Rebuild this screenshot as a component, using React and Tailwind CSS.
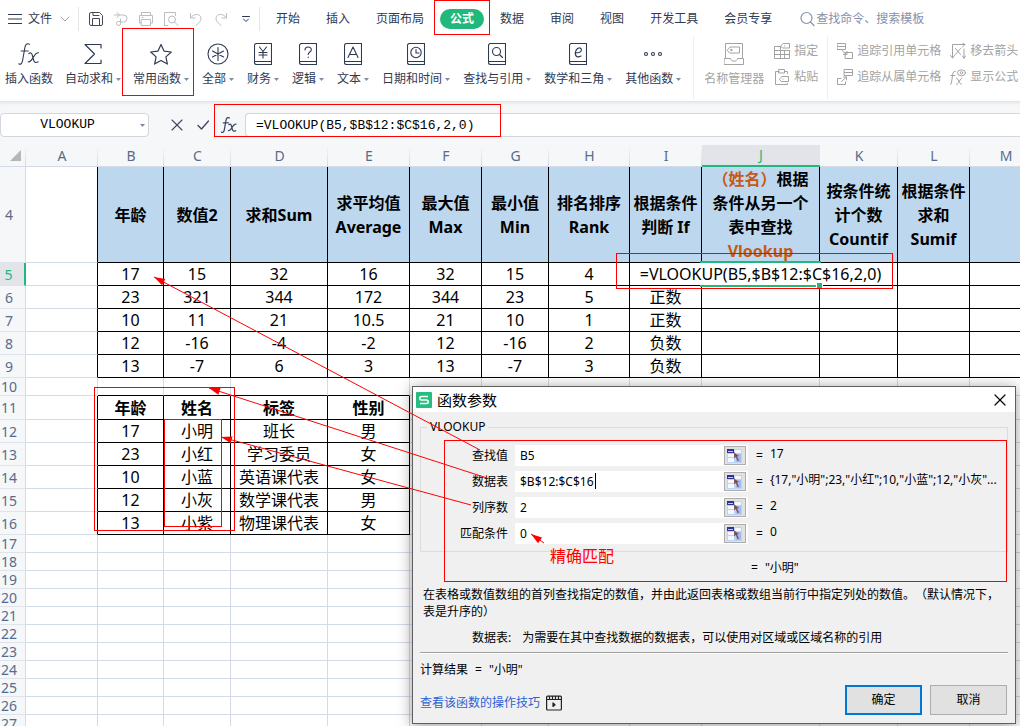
import React from "react";

/* ---------- icons ---------- */

function Line({ w = 16, h = 16, sw = 1, children, className = "" }) {
  return (
    <svg
      width={w}
      height={h}
      viewBox={`0 0 ${w} ${h}`}
      fill="none"
      stroke="currentColor"
      strokeWidth={sw}
      strokeLinecap="round"
      strokeLinejoin="round"
      className={"shrink-0 " + className}
      aria-hidden="true"
    >
      {children}
    </svg>
  );
}

const FxPaths = () => (
  <>
    <path d="M11.5 1.2C8.6-.2 7.3 2 6.8 5L4.600 17.500C4 20.600 2.700 22 .8 20.800M3.200 8h7" />
    <path d="M10.800 10.600c2-1.600 3-.4 3.600 1.900l1.200 4.500c.5 2 1.800 3.300 4.600 1.800M20.500 9.800c-2.200-.3-3.200 1.200-5 4.200s-3.200 5.400-5.300 4.800" />
  </>
);
const FxIcon = () => <Line w={22} h={22} sw={1.1}><FxPaths /></Line>;

const SumIcon = () => (
  <Line w={20} h={22} sw={1.2}><path d="M18 5V1.500H2L11.500 11 2 20.500h16V17" /></Line>
);
const StarIcon = () => (
  <Line w={24} h={22} sw={1.2}>
    <path d="M12 1.500l3.100 6.700 7.200.8-5.400 4.900 1.500 7.200L12 17.500l-6.400 3.600 1.500-7.200L1.700 9l7.200-.8z" />
  </Line>
);
const AllIcon = () => (
  <Line w={22} h={22} sw={1.1}>
    <circle cx="11" cy="11" r="10" />
    <path d="M11 4.500v13M5.500 8l11 6M16.500 8l-11 6" />
  </Line>
);
const Book = ({ children }) => (
  <Line w={18} h={22} sw={1.1}>
    <path d="M17.500.5H2.500a2 2 0 0 0-2 2v17a2 2 0 0 0 2 2h15zM.8 18.500h16.700" />
    {children}
  </Line>
);
const YenIcon = () => <Book><path d="M5.500 4L9 8.500 12.500 4M9 8.500V15M5 9.500h8M5 12h8" /></Book>;
const AskIcon = () => (
  <Book>
    <path d="M6 7c0-4 6.300-4 6.300-.3C12.300 9 9.200 9 9.200 11.500M9.200 14v.5" />
  </Book>
);
const TextIcon = () => <Book><path d="M4 14.500L9 4l5 10.500M5.700 11.500h6.600" /></Book>;
const ClockIcon = () => <Book><circle cx="9" cy="9.500" r="5.200" /><path d="M9 6.500v3.500h3" /></Book>;
const FindIcon = () => <Book><circle cx="8.500" cy="8.500" r="4" /><path d="M11.500 11.500l3 3" /></Book>;
const MathIcon = () => (
  <Book><path d="M6 9.700c4 .3 6.500-.7 6.400-3C12.300 4 7.500 4 6.500 9c-.8 4.500 2 6 5.500 4" /></Book>
);
const MoreIcon = () => (
  <Line w={20} h={22} sw={1.1}>
    <circle cx="3" cy="11" r="1.500" /><circle cx="10" cy="11" r="1.500" /><circle cx="17" cy="11" r="1.500" />
  </Line>
);
const NamesIcon = () => (
  <Line w={20} h={22}>
    <path d="M1.500 15.500V.5h17v15M.5 15.500h6c.5 3.600 6.500 3.600 7 0h6v6H.5z" />
    <path d="M3.500 7L6 4h9.500v6H6z" /><circle cx="7.200" cy="7" r=".8" />
  </Line>
);
const AssignIcon = () => (
  <Line>
    <path d="M6 3.500H.5v12h15v-8M.5 7.500h15M.5 11.500h15M6.500 3.500v12M10.500 7.500v8M7 2.800L9 .5h6.500v4.500H9z" />
    <path d="M10.500 2.800h.2" />
  </Line>
);
const PasteIcon = () => (
  <Line>
    <path d="M11 2.500h2.500v2M5 2.500H1.500v13h12v-1M5 .5h5.500v3.500H5zM5.500 10L8 7.500h6.500v5H8z" />
    <path d="M9 10h.2" />
  </Line>
);
const TraceToIcon = () => (
  <Line>
    <path d="M.5.5h8v6h-8zM.5 3.500h8M8.500 9.500h7v6h-7zM.5 6.500h4M5 7.500l4.500 4M10 8.500v3H6.500" />
  </Line>
);
const TraceFromIcon = () => (
  <Line>
    <path d="M7.500.5h8v6h-8zM7.500 3.500h8M4 9.500H.5v6h8V13M4.500 12.500l5-4.500M6.500 8h3v3" />
  </Line>
);
const RemoveArrowsIcon = () => (
  <Line>
    <path d="M2.500 15V1.500H15M12.500 0L15 1.500 12.500 4M14 6v9M.5 12.500l2 2.500 2-2.500M15.500 13L14 15.300 12.500 13M5.500 5.500l5 6M10.500 5.500l-5 6" />
  </Line>
);
const ShowFormulaIcon = () => (
  <Line>
    <path d="M5.500 2.500c-2-.8-2.500 1-2.800 3L1.600 13c-.2 1.700-.6 2.500-1.300 2.300M.8 6.500h4M6.500 9c2 0 2.500 6.300 5 6.300M12 9c-2 0-3 6.300-5.500 6.300" />
    <ellipse cx="11.500" cy="3.800" rx="4" ry="3" /><circle cx="11.500" cy="3.800" r="1.200" />
  </Line>
);

const SaveIcon = () => (
  <Line><path d="M1.500 12.500V3A1.500 1.500 0 0 1 3 1.500h8.500l3 3V13a1.500 1.500 0 0 1-1.500 1.500H3A1.500 1.500 0 0 1 1.500 13zM5 1.500v3h6M4.500 14.500v-7h7v7" /></Line>
);
const ShareIcon = () => (
  <Line><path d="M4 1.500L6.500 4 4 6.500M1.500 4h9a3.500 3.500 0 0 1 0 7H7M7.500 8v4.500a2 2 0 1 1-2-2h2" /></Line>
);
const PrintIcon = () => (
  <Line><path d="M3.500 4.500v-3h9v3M3.500 12H1.500V4.500h13V12h-2M3.500 8.500h9v6h-9zM4 6.500h1" /></Line>
);
const PreviewIcon = () => (
  <Line><path d="M5 14.500H1.500v-13h11v3" /><circle cx="9" cy="8.500" r="3.500" /><path d="M11.500 11l3.500 3.500" /></Line>
);
const UndoIcon = () => (
  <Line><path d="M2.500 2.500v4.500h4.500M2.800 6.500C6 2 13 2.500 13 7.500c0 3-2.500 4.500-5 7" /></Line>
);
const RedoIcon = () => (
  <Line><path d="M13.500 2.500v4.500H9M13.200 6.500C10 2 3 2.500 3 7.500c0 3 2.500 4.500 5 7" /></Line>
);
const PlayIcon = () => (
  <Line sw={1.200}>
    <rect x=".6" y="1.200" width="14.800" height="13.800" rx="1" />
    <path d="M.8 4.500h14.400M3.500 1.500v3M6.500 1.500v3M9.500 1.500v3M12.500 1.500v3" />
    <path d="M7 8v3.500L9 9.800z" fill="currentColor" />
  </Line>
);
const RangeIcon = () => (
  <svg width="16" height="14" viewBox="0 0 16 14" aria-hidden="true">
    <path d="M7 0h8v14H0V4h7z" fill="#b9d3fb" />
    <path d="M1 5h6v3H1zM1 9h6v4H1zM8 1h6v3H8z" fill="#f4f8ff" />
    <path d="M9 5h5v8H9z" fill="#9dbdf5" />
    <path d="M0 0h7v4H0z" fill="#33338f" />
    <path d="M1 2h5v1H1z" fill="#c9c9d8" />
    <path d="M7 3.500l5 3.500-2 .5 2 4-1.300.6-1.900-4L7.200 9.500z" fill="#8a4a42" />
  </svg>
);

const Caret = () => (
  <svg width="5" height="3" viewBox="0 0 5 3" className="shrink-0 text-[#7f8ba3]" aria-hidden="true">
    <path d="M0 0h5L2.500 3z" fill="currentColor" />
  </svg>
);

/* ---------- ribbon ---------- */

const tabs = ["开始", "插入", "页面布局", "公式", "数据", "审阅", "视图", "开发工具", "会员专享"];

const quick = [
  ["保存", SaveIcon, "text-[#444a55]"],
  ["输出", ShareIcon, "text-[#bdbdbd]"],
  ["打印", PrintIcon, "text-[#bdbdbd]"],
  ["打印预览", PreviewIcon, "text-[#bdbdbd]"],
  ["撤销", UndoIcon, "text-[#bdbdbd]"],
  ["恢复", RedoIcon, "text-[#bdbdbd]"],
];

function TopBar() {
  return (
    <div className="flex h-[37px] shrink-0 items-center whitespace-nowrap">
      <button className="flex items-center pl-2">
        <Line w={14} h={10}><path d="M0 .5h14M0 5h14M0 9.500h14" /></Line>
        <span className="ml-1.5">文件</span>
        <Line w={10} h={6} className="ml-2 text-[#a0a4ab]"><path d="M1 1l4 4 4-4" /></Line>
      </button>
      <div className="ml-2 h-6 w-px bg-[#e3e5e8]" />
      <div className="ml-[9px] flex items-center gap-[9px]">
        {quick.map(([name, Icon, color]) => (
          <button key={name} aria-label={name} className={color}><Icon /></button>
        ))}
        <button aria-label="自定义" className="ml-1">
          <Line w={8} h={8}><path d="M.5 1.500h7M1.500 4L4 6.500 6.500 4" /></Line>
        </button>
      </div>
      <div className="ml-[9px] h-6 w-px bg-[#e3e5e8]" />
      <nav className="ml-4 flex items-center gap-[26px]">
        {tabs.map((t) =>
          t === "公式" ? (
            <button key={t} className="-mx-2.5 h-5 rounded-full bg-[#21b97b] px-2.5 font-bold leading-5 text-white">{t}</button>
          ) : (
            <button key={t}>{t}</button>
          )
        )}
      </nav>
      <button className="ml-7 flex items-center gap-px text-[#8591ab]">
        <Line w={15} h={16} sw={1.200}><circle cx="6.500" cy="7" r="5.500" /><path d="M10.500 11l3.500 3.500" /></Line>
        查找命令、搜索模板
      </button>
    </div>
  );
}

function Tool({ icon: Icon, label, menu = true }) {
  return (
    <button className="flex flex-col items-center gap-1">
      <Icon />
      <span className="flex items-center gap-[3px] leading-5">
        {label}
        {menu && <Caret />}
      </span>
    </button>
  );
}

const library = [
  ["全部", AllIcon], ["财务", YenIcon], ["逻辑", AskIcon], ["文本", TextIcon], ["日期和时间", ClockIcon],
  ["查找与引用", FindIcon], ["数学和三角", MathIcon], ["其他函数", MoreIcon],
];

function Small({ icon: Icon, label }) {
  return (
    <button className="flex items-center gap-1 leading-4"><Icon />{label}</button>
  );
}

function Ribbon() {
  return (
    <div className="flex h-16 shrink-0 items-start whitespace-nowrap">
      <div className="flex gap-3 pl-[5px] pt-1.5">
        <Tool icon={FxIcon} label="插入函数" menu={false} />
        <Tool icon={SumIcon} label="自动求和" />
        <Tool icon={StarIcon} label="常用函数" />
      </div>
      <div className="flex gap-[13px] pl-[13px] pt-1.5">
        {library.map(([label, icon]) => <Tool key={label} icon={icon} label={label} />)}
      </div>
      <div className="ml-3 h-[62px] w-px shrink-0 bg-[#eceef0]" />
      <div className="flex gap-2.5 pl-2.5 pt-1.5 text-[#a3a3a3]">
        <Tool icon={NamesIcon} label="名称管理器" menu={false} />
        <div className="flex flex-col gap-2.5">
          <Small icon={AssignIcon} label="指定" />
          <Small icon={PasteIcon} label="粘贴" />
        </div>
      </div>
      <div className="ml-[9px] h-[62px] w-px shrink-0 bg-[#eceef0]" />
      <div className="grid grid-cols-[auto_auto] gap-x-[9px] gap-y-2.5 pl-[9px] pt-1.5 text-[#a3a3a3]">
        <Small icon={TraceToIcon} label="追踪引用单元格" />
        <Small icon={RemoveArrowsIcon} label="移去箭头" />
        <Small icon={TraceFromIcon} label="追踪从属单元格" />
        <Small icon={ShowFormulaIcon} label="显示公式" />
      </div>
    </div>
  );
}

function FormulaBar() {
  return (
    <div className="flex shrink-0 items-center bg-[#f5f7f9] pb-2 pt-3 text-[#3b4660] shadow-[inset_0_4px_4px_-3px_rgba(0,0,0,0.12)]">
      <div className="flex h-6 w-[149px] items-center rounded-sm border border-[#d3d6dc] bg-white pr-[3px]">
        <input aria-label="名称框" defaultValue="VLOOKUP" className="w-full min-w-0 pr-1.5 text-center font-['Liberation_Mono',monospace] text-[13px] text-black outline-none" />
        <Caret />
      </div>
      <button aria-label="取消输入" className="ml-[22px]"><Line w={12} h={12} sw={1.100}><path d="M1 1l10 10M11 1L1 11" /></Line></button>
      <button aria-label="确认输入" className="ml-3.5"><Line w={12} h={12} sw={1.300}><path d="M1 6.500L4.500 10 11.500 2" /></Line></button>
      <button aria-label="插入函数" className="ml-3">
        <svg width="16" height="16" viewBox="0 0 22 22" fill="none" stroke="currentColor" strokeWidth="1.700" strokeLinecap="round" aria-hidden="true"><FxPaths /></svg>
      </button>
      <input
        aria-label="编辑栏"
        defaultValue="=VLOOKUP(B5,$B$12:$C$16,2,0)"
        className="ml-2 h-6 min-w-0 flex-1 rounded-l-sm border border-r-0 border-[#d3d6dc] bg-white pl-2.5 font-['Liberation_Mono',monospace] text-[13px] text-black outline-none"
      />
    </div>
  );
}

/* ---------- sheet ---------- */

const columns = [
  ["A", "w-[72px]"], ["B", "w-[66px]"], ["C", "w-[67px]"], ["D", "w-[97px]"], ["E", "w-[82px]"],
  ["F", "w-[72px]"], ["G", "w-[67px]"], ["H", "w-[81px]"], ["I", "w-[72px]"], ["J", "w-[118px]"],
  ["K", "w-[78px]"], ["L", "w-[72px]"], ["M", ""],
];

const lookupHead = (
  <>
    <div className="flex justify-center whitespace-nowrap"><span className="text-[#c55a11]">（姓名）</span><span>根据</span></div>
    <div>条件从另一个</div>
    <div>表中查找</div>
    <div className="text-[#c55a11]">Vlookup</div>
  </>
);

const head4 = [
  "", "年龄", "数值2", "求和Sum", "求平均值 Average", "最大值 Max", "最小值 Min", "排名排序 Rank", "根据条件判断 If",
  lookupHead, "按条件统计个数 Countif", "根据条件求和 Sumif", "",
];

const sheet = {
  5: ["", 17, 15, 32, 16, 32, 15, 4, ""],
  6: ["", 23, 321, 344, 172, 344, 23, 5, "正数"],
  7: ["", 10, 11, 21, 10.5, 21, 10, 1, "正数"],
  8: ["", 12, -16, -4, -2, 12, -16, 2, "负数"],
  9: ["", 13, -7, 6, 3, 13, -7, 3, "负数"],
  11: ["", "年龄", "姓名", "标签", "性别"],
  12: ["", 17, "小明", "班长", "男"],
  13: ["", 23, "小红", "学习委员", "女"],
  14: ["", 10, "小蓝", "英语课代表", "女"],
  15: ["", 12, "小灰", "数学课代表", "男"],
  16: ["", 13, "小紫", "物理课代表", "女"],
};

const rowNumbers = Array.from({ length: 24 }, (_, i) => i + 4);

function rowHeight(n) {
  if (n === 4) return "h-[96px]";
  if (n === 11) return "h-[24px]";
  if ((n >= 5 && n <= 9) || (n >= 12 && n <= 16)) return "h-[23px]";
  return "h-[18px]";
}

function cellBorder(n, c) {
  const upper = n >= 4 && n <= 9;
  const lower = n >= 11 && n <= 16;
  const right = upper || (lower && c <= 4) ? "border-r-black" : "border-r-[#d3dbe9]";
  const bottom = (upper && c >= 1) || (n >= 10 && n <= 16 && c >= 1 && c <= 4) ? "border-b-black" : "border-b-[#d3dbe9]";
  return right + " " + bottom;
}

function ActiveEditor() {
  return (
    <>
      <div className="absolute -inset-0.5 border-2 border-[#21b97b]" />
      <input
        aria-label="J5"
        defaultValue="=VLOOKUP(B5,$B$12:$C$16,2,0)"
        className="absolute left-1/2 top-0 h-[22px] w-[254px] -translate-x-1/2 bg-white text-center outline-none"
      />
      <div className="absolute -bottom-[3px] -right-[3px] size-[5px] bg-[#21b97b] outline outline-white" />
    </>
  );
}

function Sheet() {
  return (
    <table className="w-full min-w-[1042px] table-fixed border-separate border-spacing-0 text-center">
      <colgroup>
        <col className="w-[26px]" />
        {columns.map(([k, w]) => <col key={k} className={w} />)}
      </colgroup>
      <thead>
        <tr className="h-[22px] bg-[#f5f7f9] text-sm leading-5 text-[#5a6b8a]">
          <th className="border-b border-[#d3dbe9] bg-[linear-gradient(to_bottom,#f5f7f9,#d3dbe9)] bg-[length:1px_100%] bg-right bg-no-repeat p-0">
            <svg width="11" height="11" viewBox="0 0 11 11" className="ml-[10px]" aria-hidden="true"><path d="M11 0v11H0z" fill="#b4b6ba" /></svg>
          </th>
          {columns.map(([k]) =>
            k === "J" ? (
              <th key={k} className="border-b-2 border-[#21b97b] bg-[#e2e4ea] p-0 font-normal text-[#21b97b]">{k}</th>
            ) : (
              <th key={k} className="border-b border-[#d3dbe9] bg-[linear-gradient(to_bottom,#f5f7f9,#d3dbe9)] bg-[length:1px_100%] bg-right bg-no-repeat p-0 font-normal">{k}</th>
            )
          )}
        </tr>
      </thead>
      <tbody>
        {rowNumbers.map((n) => (
          <tr key={n} className={rowHeight(n)}>
            <th
              className={
                "border-b border-b-[#dfe4ec] p-0 pr-[7px] text-sm font-normal leading-[17px] " +
                (n === 5 ? "border-r-2 border-r-[#21b97b] bg-[#e2e4ea] text-[#21b97b]" : "border-r border-r-[#d3dbe9] bg-[#f5f7f9] text-[#5a6b8a]")
              }
            >
              {n}
            </th>
            {columns.map(([k], c) => (
              <td
                key={k}
                className={
                  "border-b border-r p-0 text-base " + cellBorder(n, c) +
                  (n === 4 && c > 0 ? " bg-[#bdd7ee]" : "") +
                  (n === 4 || n === 11 ? " font-bold" : "") +
                  (n === 5 && k === "J" ? " relative" : "")
                }
              >
                {n === 4 ? (
                  <div className="flex h-[95px] items-center justify-center leading-6"><div>{head4[c]}</div></div>
                ) : n === 5 && k === "J" ? (
                  <ActiveEditor />
                ) : sheet[n] ? (
                  <div className="whitespace-nowrap leading-[22px]">{sheet[n][c]}</div>
                ) : null}
              </td>
            ))}
          </tr>
        ))}
      </tbody>
    </table>
  );
}

/* ---------- dialog ---------- */

const args = [
  ["查找值", "B5", "17"],
  ["数据表", "$B$12:$C$16", "{17,\"小明\";23,\"小红\";10,\"小蓝\";12,\"小灰\"..."],
  ["列序数", "2", "2"],
  ["匹配条件", "0", "0"],
];

function ArgumentsDialog() {
  return (
    <section
      role="dialog"
      aria-label="函数参数"
      className="absolute left-[412px] top-[386px] w-[604px] border border-[#5f5f5f] bg-[#f0f0f0] text-xs leading-[18px] text-black shadow-[0_2px_14px_rgba(0,0,0,0.4)]"
    >
      <div className="flex h-[25px] items-center bg-white pl-[3px] pr-[9px]">
        <svg width="16" height="16" viewBox="0 0 16 16" aria-hidden="true">
          <rect width="16" height="16" rx="1" fill="#25bd80" />
          <path d="M12 4.500H5.500a1.700 1.700 0 0 0 0 3.500h5a1.700 1.700 0 0 1 0 3.500H4" fill="none" stroke="#fff" strokeWidth="1.500" />
        </svg>
        <h2 className="ml-[5px] text-[15px]">函数参数</h2>
        <button aria-label="关闭" className="ml-auto"><Line w={12} h={12} sw={1.200}><path d="M1 1l10 10M11 1L1 11" /></Line></button>
      </div>
      <fieldset className="mx-[7px] mt-1.5 flex flex-col gap-[5px] border border-[#dcdcdc] pb-[7px] pt-[9px]">
        <legend className="ml-1.5 px-[3px]">VLOOKUP</legend>
        {args.map(([label, value, result], i) => (
          <div key={label} className="flex h-[21px] items-center">
            <label htmlFor={"arg" + i} className="w-[87px] text-right">{label}</label>
            <div className="relative ml-[7px] flex h-[21px] w-[233px] items-center bg-white pr-0.5">
              <input id={"arg" + i} defaultValue={value} className="min-w-0 flex-1 bg-transparent pl-[5px] outline-none" />
              {i === 1 && <span className="absolute left-20 top-0.5 h-4 w-px bg-black" />}
              <button aria-label="选择区域" className="flex h-[19px] w-[22px] items-center justify-center border border-[#adadad] bg-[#e1e1e1]"><RangeIcon /></button>
            </div>
            <span className="ml-2">=</span>
            <output className="ml-[7px] whitespace-nowrap pb-1">{result}</output>
          </div>
        ))}
      </fieldset>
      <p className="mt-[7px] flex gap-[7px] pl-[338px]"><span>=</span><span>"小明"</span></p>
      <p className="mt-[9px] pl-2.5 pr-2 leading-[17px] [text-spacing-trim:space-all]">
        在表格或数值数组的首列查找指定的数值，并由此返回表格或数组当前行中指定列处的数值。（默认情况下，表是升序的）
      </p>
      <p className="mt-[9px] flex gap-[11px] pl-[59px]">
        <span>数据表:</span>
        <span>为需要在其中查找数据的数据表，可以使用对区域或区域名称的引用</span>
      </p>
      <hr className="mx-[7px] mt-[5px] h-0.5 border-t border-[#a0a0a0] bg-white" />
      <p className="mt-[7px] flex gap-[7px] pl-[7px]"><span>计算结果</span><span>=</span><span>"小明"</span></p>
      <div className="mt-1.5 flex items-end gap-2 pb-2 pl-[7px] pr-2">
        <a href="#help" className="mr-auto flex items-center gap-1.5 leading-6 text-[#2a63d6]">
          查看该函数的操作技巧
          <span className="text-[#222]"><PlayIcon /></span>
        </a>
        <button className="h-[30px] w-[77px] border-2 border-[#0078d7] bg-[#e1e1e1]">确定</button>
        <button className="h-[30px] w-[77px] border border-[#adadad] bg-[#e1e1e1]">取消</button>
      </div>
    </section>
  );
}

/* ---------- red call-outs ---------- */

const boxes = [
  [434, 0, 55, 34], [122, 28, 71, 67], [214, 104, 286, 32], [616, 253, 276, 35],
  [94, 387, 140, 143], [164, 419, 57, 107], [444, 440, 562, 141],
];
const arrows = [
  [480, 450, 154, 277], [487, 478, 209, 388], [471, 505, 221, 437], [544, 543, 531, 534],
];

function Callouts() {
  return (
    <>
      <svg className="pointer-events-none absolute left-0 top-0" width="1020" height="726" fill="none" stroke="#ff0000" aria-hidden="true">
        {boxes.map(([x, y, w, h]) => <rect key={x + "-" + y} x={x + 0.5} y={y + 0.5} width={w} height={h} />)}
        {arrows.map(([x1, y1, x2, y2]) => {
          const angle = (Math.atan2(y2 - y1, x2 - x1) * 180) / Math.PI;
          return (
            <g key={x1}>
              <line x1={x1} y1={y1} x2={x2} y2={y2} />
              <path d="M0 0L-11 -3.500V3.500z" fill="#ff0000" stroke="none" transform={`translate(${x2} ${y2}) rotate(${angle})`} />
            </g>
          );
        })}
      </svg>
      <span className="absolute left-[550px] top-[544px] text-base leading-6 text-[#ff0000]">精确匹配</span>
    </>
  );
}

export default function App() {
  return (
    <main className="relative flex h-screen flex-col overflow-hidden bg-white font-['Noto_Sans','Noto_Sans_CJK_SC',sans-serif] text-xs text-[#2f3a52]">
      <TopBar />
      <Ribbon />
      <FormulaBar />
      <div className="min-h-0 flex-1 overflow-hidden text-black"><Sheet /></div>
      <ArgumentsDialog />
      <Callouts />
    </main>
  );
}
